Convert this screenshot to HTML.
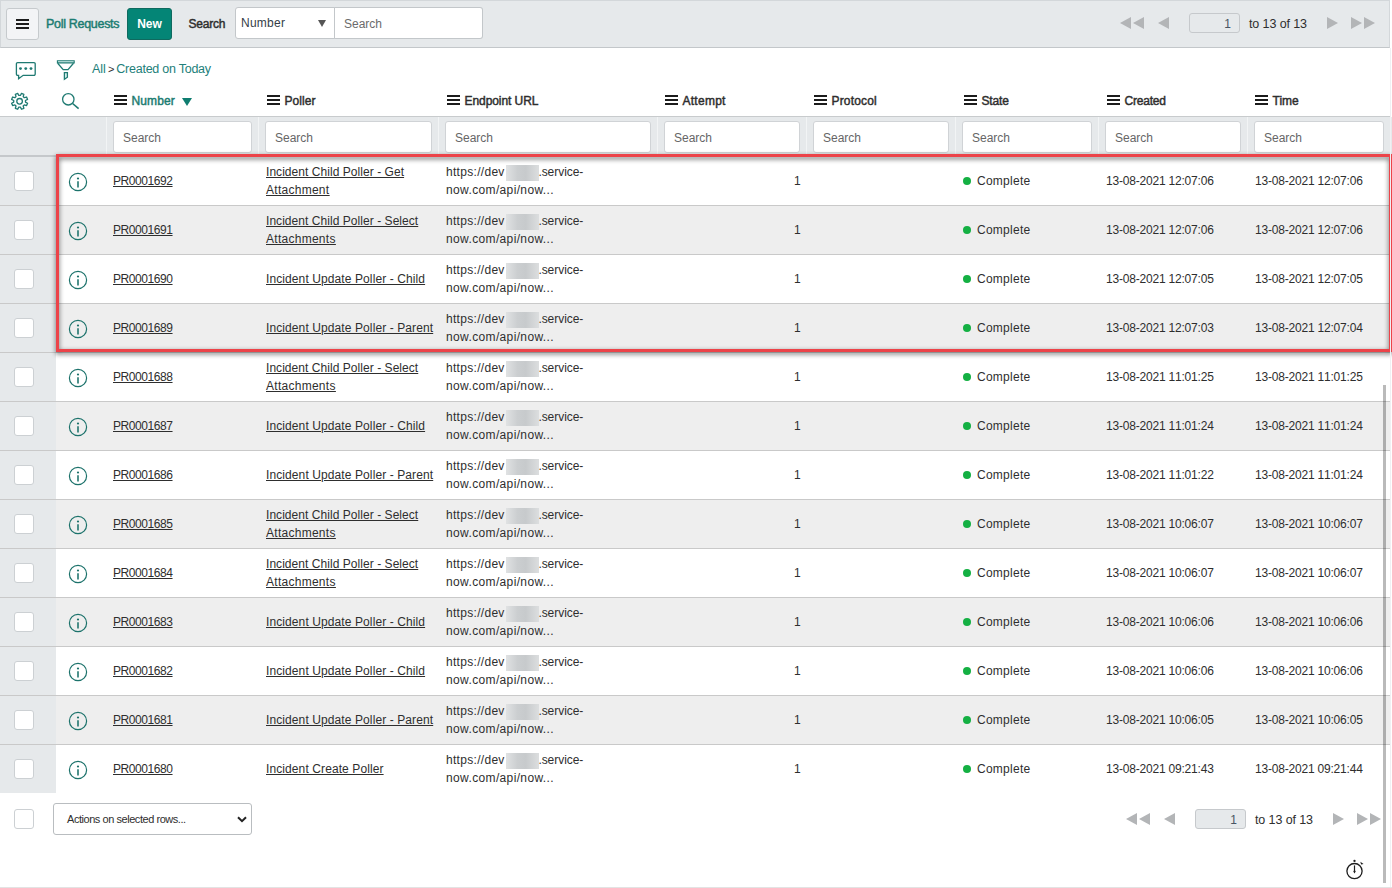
<!DOCTYPE html>
<html lang="en">
<head>
<meta charset="utf-8">
<title>Poll Requests</title>
<style>
html,body{margin:0;padding:0}
body{width:1392px;height:888px;overflow:hidden;background:#fff;position:relative;font-family:"Liberation Sans",sans-serif;font-size:12px;color:#2e2e2e}
i{font-style:normal;display:block}
a{color:#2e2e2e;text-decoration:underline}
/* ---- top nav ---- */
.nav{position:absolute;left:0;top:0;width:1391px;height:48px}
.navbg{position:absolute;left:0;top:0;width:1388px;height:46px;background:#e6e9eb;border:1px solid #d3d7da;border-bottom:1px solid #c3c7ca}
.menubtn{position:absolute;left:6px;top:8px;width:31px;height:30px;border:1px solid #c6cacd;border-radius:3px;background:#f3f4f6}
.menubtn b{position:absolute;left:9px;width:13px;height:2px;background:#1c1c1c}
.title{position:absolute;left:46px;top:16px;font-size:12.5px;letter-spacing:-0.3px;-webkit-text-stroke:0.45px #1b7c71;line-height:16px;color:#1b7c71;white-space:nowrap}
.newbtn{position:absolute;left:127px;top:8px;width:43px;height:30px;border:1px solid #0f6a5f;border-radius:3px;background:#048576;color:#fff;font-weight:bold;font-size:12px;line-height:30px;text-align:center}
.slabel{position:absolute;left:188.500px;top:16px;font-weight:normal;-webkit-text-stroke:0.45px;font-size:12px;letter-spacing:-0.2px;line-height:16px;color:#2e2e2e}
.ssel{position:absolute;left:235px;top:7px;width:98px;z-index:2;height:30px;border:1px solid #c3c7ca;border-radius:3px 0 0 3px;background:#fff}
.ssel span{position:absolute;left:5px;top:7px;line-height:16px;font-size:12px;letter-spacing:0.25px;color:#343d47}
.ssel i{position:absolute;left:82px;top:12px;width:0;height:0;border-left:4.5px solid transparent;border-right:4.5px solid transparent;border-top:7px solid #555}
.sinp{position:absolute;left:334px;top:7px;width:148px;height:30px;border:1px solid #c3c7ca;border-left:0;border-radius:0 3px 3px 0;background:#fff}
.sinp span{position:absolute;left:10px;top:8px;line-height:16px;color:#6b6b6b}
.pg{position:absolute;height:20px}
.pg .tri{position:absolute;top:0;width:0;height:0;border-top:6px solid transparent;border-bottom:6px solid transparent}
.pg .l{border-right:11.5px solid #b3b5b7}
.pg .r{border-left:11.5px solid #b3b5b7}
.pg .box{position:absolute;width:49px;height:18px;border:1px solid #c6c9cc;border-radius:3px;background:#e6e9eb}
.pg .box span{position:absolute;right:8px;top:3px;line-height:15px;color:#485563}
.pg .txt{position:absolute;white-space:nowrap;line-height:16px;font-size:12.5px;letter-spacing:-0.1px;color:#2e2e2e}
/* ---- breadcrumb row ---- */
.bc{position:absolute;left:92px;top:61px;line-height:16px;font-size:12.5px;color:#23807a;white-space:nowrap}
.bc b{font-weight:normal;font-size:11px;color:#2e2e2e;margin:0 2px 0 2px}
.bc span{letter-spacing:-0.25px}
svg.ic{position:absolute;fill:none;stroke:#1f7a72;stroke-width:1.3;overflow:visible}
/* ---- column header ---- */
.colhead{position:absolute;left:0;top:88px;width:1390px;height:28px;border-bottom:1px solid #c8cbcd}
.ch{position:absolute;top:5px;height:16px;white-space:nowrap;font-weight:normal;-webkit-text-stroke:0.45px;font-size:12px;letter-spacing:0.1px;line-height:16px;color:#2e2e2e}
.ch .hb{position:absolute;left:0;top:2px;width:13px;height:10px}
.ch .hb b{display:block;height:2px;background:#1c1c1c;margin-bottom:2px}
.ch span{position:absolute;left:17.500px;top:0}
.ch.sorted span{color:#1b7c71}
.sortarrow{position:absolute;left:67.500px;top:4.500px;width:0;height:0;border-left:5px solid transparent;border-right:5px solid transparent;border-top:8.500px solid #0f7d70}
/* ---- search row ---- */
.searchrow{position:absolute;left:0;top:117px;width:1392px;height:38px;background:#e6e9eb;border-bottom:2px solid #c5c8cb}
.vsep{position:absolute;top:0;width:1px;height:38px;background:#f2f4f5}
.sin{position:absolute;top:4px;height:30px;border:1px solid #d0d3d6;border-radius:3px;background:#fff}
.sin span{position:absolute;left:9px;top:8px;line-height:16px;color:#666}
/* ---- rows ---- */
.row{position:absolute;left:0;width:1390px;height:48px;border-bottom:1px solid #c9c9c9;background:#fff}
.row.even{background:#eee}
.row.last{border-bottom:0}
.cbcell{position:absolute;left:0;top:0;width:56px;height:48px;background:#e6e9eb}
.cb{position:absolute;left:14px;top:14px;width:18px;height:18px;border:1px solid #ccd0d3;border-radius:3px;background:#fff}
svg.info{position:absolute;left:67.500px;top:15px;width:20px;height:20px;fill:none;stroke:#1c726b;stroke-width:1.200}
svg.info .d{fill:#1c726b;stroke:none}
.num{position:absolute;left:113px;top:16px;line-height:16px;letter-spacing:-0.43px;white-space:nowrap}
.pol{position:absolute;left:266px;top:16px;line-height:16px;letter-spacing:0.1px;white-space:nowrap}
.pol.two{top:6px;line-height:18px;letter-spacing:0.05px}
.url{position:absolute;left:446px;top:6px;line-height:18px;letter-spacing:0.3px;white-space:nowrap}
.url u{text-decoration:none;letter-spacing:-0.05px}
.url span{letter-spacing:0.36px}
.pol u{letter-spacing:0.27px}
.url .blur{display:inline-block;vertical-align:-4.500px;width:33px;height:16px;margin:-4px -0.300px 0 1px;background:linear-gradient(90deg,#e0e2e3,#cbced0 35%,#c7cacc 60%,#dcdedf)}
.att{position:absolute;right:589.300px;top:16px;line-height:16px}
.dot{position:absolute;left:963px;top:20px;width:8px;height:8px;border-radius:50%;background:#14b043}
.st{position:absolute;left:977px;top:16px;line-height:16px;letter-spacing:0.26px}
.dt{position:absolute;top:16px;line-height:16px;letter-spacing:-0.2px;font-kerning:none;white-space:nowrap}
.c1{left:1106px}
.c2{left:1255px}
/* ---- highlight ---- */
.hl{position:absolute;left:56px;top:154px;width:1330px;height:191.500px;border:3px solid #ec4349;filter:drop-shadow(0 2px 2.500px rgba(0,0,0,.62))}
/* ---- footer ---- */
.fcb{position:absolute;left:14px;top:809px;width:18px;height:18px;border:1px solid #ccd0d3;border-radius:3px;background:#fff}
.fsel{position:absolute;left:53px;top:803px;width:197px;height:30px;border:1px solid #b9bdc0;border-radius:3px;background:#fff}
.fsel span{position:absolute;left:13px;top:7px;line-height:16px;font-size:11px;letter-spacing:-0.45px;color:#2e2e2e;white-space:nowrap}
.fsel svg{position:absolute;left:183px;top:11.500px;width:10px;height:7px;fill:none;stroke:#222;stroke-width:2}
.scroll{position:absolute;left:1383px;top:385px;width:3px;height:498px;background:rgba(0,0,0,.27)}
.botline{position:absolute;left:0;top:887px;width:1392px;height:1px;background:#e3e3e3}
.rline{position:absolute;left:1390px;top:48px;width:1px;height:839px;background:#f0f0f3}
</style>
</head>
<body>
<div class="nav">
<div class="navbg"></div>
<div class="menubtn"><b style="top:10px"></b><b style="top:14px"></b><b style="top:18px"></b></div>
<div class="title">Poll Requests</div>
<div class="newbtn">New</div>
<div class="slabel">Search</div>
<div class="ssel"><span>Number</span><i></i></div>
<div class="sinp"><span>Search</span></div>
<div class="pg" style="left:1px;top:17px">
<i class="tri l" style="left:1119px"></i><i class="tri l" style="left:1131.500px"></i>
<i class="tri l" style="left:1156.500px"></i>
<div class="box" style="left:1188px;top:-4px"><span>1</span></div>
<div class="txt" style="left:1248px;top:-1px">to 13 of 13</div>
<i class="tri r" style="left:1326px"></i>
<i class="tri r" style="left:1350px"></i><i class="tri r" style="left:1362.500px"></i>
</div>
</div>
<svg class="ic" style="left:15px;top:61px;width:22px;height:19px" viewBox="0 0 22 19"><path d="M2.600 1.700h16.400a1.200 1.200 0 0 1 1.200 1.200v10.200a1.200 1.200 0 0 1-1.200 1.200H8.200l-4.600 3.500v-3.500H2.600a1.200 1.200 0 0 1-1.200-1.200V2.900a1.200 1.200 0 0 1 1.200-1.200z"/><circle cx="5.500" cy="7.600" r="1.450" fill="#1f7a72" stroke="none"/><circle cx="10.750" cy="7.600" r="1.450" fill="#1f7a72" stroke="none"/><circle cx="16" cy="7.600" r="1.450" fill="#1f7a72" stroke="none"/></svg>
<svg class="ic" style="left:56px;top:59px;width:20px;height:22px" viewBox="0 0 20 22"><path d="M1.400 1.800h16.800v2.100H1.400z" fill="#d9f3f1" stroke-width="1.100"/><path d="M1.700 4.300l5.500 6.300h4.800l5.500-6.300"/><path d="M8.400 13.600h3v4.600l-3 2z" fill="#d9f3f1"/></svg>
<div class="bc">All<b>&gt;</b><span>Created on Today</span></div>
<svg class="ic" style="left:10px;top:91px;width:20px;height:20px" viewBox="0 0 20 20"><circle cx="9.6" cy="10.3" r="2.800"/><path stroke-linejoin="round" d="M10.39 4.45L11.51 2.33L13.88 3.31L13.18 5.61L14.29 6.72L16.59 6.02L17.57 8.39L15.45 9.51L15.45 11.09L17.57 12.21L16.59 14.58L14.29 13.88L13.18 14.99L13.88 17.29L11.51 18.27L10.39 16.15L8.81 16.15L7.69 18.27L5.32 17.29L6.02 14.99L4.91 13.88L2.61 14.58L1.63 12.21L3.75 11.09L3.75 9.51L1.63 8.39L2.61 6.02L4.91 6.72L6.02 5.61L5.32 3.31L7.69 2.33L8.81 4.45z"/></svg>
<svg class="ic" style="left:61px;top:92px;width:19px;height:18px" viewBox="0 0 19 18"><circle cx="7.300" cy="7.300" r="5.700"/><path d="M11.600 11.500l6 5.200" stroke-width="1.600"/></svg>
<div class="colhead">
<div class="ch sorted" style="left:114px"><i class="hb"><b></b><b></b><b></b></i><span style="letter-spacing:0.1px">Number</span><i class="sortarrow"></i></div>
<div class="ch" style="left:267px"><i class="hb"><b></b><b></b><b></b></i><span style="letter-spacing:0.05px">Poller</span></div>
<div class="ch" style="left:447px"><i class="hb"><b></b><b></b><b></b></i><span style="letter-spacing:-0.07px">Endpoint URL</span></div>
<div class="ch" style="left:665px"><i class="hb"><b></b><b></b><b></b></i><span style="letter-spacing:0.26px">Attempt</span></div>
<div class="ch" style="left:814px"><i class="hb"><b></b><b></b><b></b></i><span style="letter-spacing:0.16px">Protocol</span></div>
<div class="ch" style="left:964px"><i class="hb"><b></b><b></b><b></b></i><span style="letter-spacing:-0.18px">State</span></div>
<div class="ch" style="left:1107px"><i class="hb"><b></b><b></b><b></b></i><span style="letter-spacing:-0.21px">Created</span></div>
<div class="ch" style="left:1255px"><i class="hb"><b></b><b></b><b></b></i><span style="letter-spacing:0.02px">Time</span></div>
</div>
<div class="searchrow">
<i class="vsep" style="left:106px"></i><div class="sin" style="left:113px;width:137px"><span>Search</span></div>
<i class="vsep" style="left:258px"></i><div class="sin" style="left:265px;width:165px"><span>Search</span></div>
<i class="vsep" style="left:438px"></i><div class="sin" style="left:445px;width:204px"><span>Search</span></div>
<i class="vsep" style="left:657px"></i><div class="sin" style="left:664px;width:134px"><span>Search</span></div>
<i class="vsep" style="left:806px"></i><div class="sin" style="left:813px;width:134px"><span>Search</span></div>
<i class="vsep" style="left:955px"></i><div class="sin" style="left:962px;width:128px"><span>Search</span></div>
<i class="vsep" style="left:1098px"></i><div class="sin" style="left:1105px;width:134px"><span>Search</span></div>
<i class="vsep" style="left:1247px"></i><div class="sin" style="left:1254px;width:128px"><span>Search</span></div>
</div>
<div class="rows">
<div class="row" style="top:157px"><div class="cbcell"><i class="cb"></i></div><svg class="info" viewBox="0 0 20 20"><circle cx="10" cy="10" r="8.6"/><path d="M10 9.200v6.200" stroke-width="1.550"/><circle class="d" cx="10" cy="6.500" r="1.100"/></svg><a class="num">PR0001692</a><a class="pol two">Incident Child Poller - Get<br><u>Attachment</u></a><div class="url">https://dev<i class="blur"></i><u>.service-</u><br><span>now.com/api/now...</span></div><span class="att">1</span><i class="dot"></i><span class="st">Complete</span><span class="dt c1">13-08-2021 12:07:06</span><span class="dt c2">13-08-2021 12:07:06</span></div>
<div class="row even" style="top:206px"><div class="cbcell"><i class="cb"></i></div><svg class="info" viewBox="0 0 20 20"><circle cx="10" cy="10" r="8.6"/><path d="M10 9.200v6.200" stroke-width="1.550"/><circle class="d" cx="10" cy="6.500" r="1.100"/></svg><a class="num">PR0001691</a><a class="pol two">Incident Child Poller - Select<br><u>Attachments</u></a><div class="url">https://dev<i class="blur"></i><u>.service-</u><br><span>now.com/api/now...</span></div><span class="att">1</span><i class="dot"></i><span class="st">Complete</span><span class="dt c1">13-08-2021 12:07:06</span><span class="dt c2">13-08-2021 12:07:06</span></div>
<div class="row" style="top:255px"><div class="cbcell"><i class="cb"></i></div><svg class="info" viewBox="0 0 20 20"><circle cx="10" cy="10" r="8.6"/><path d="M10 9.200v6.200" stroke-width="1.550"/><circle class="d" cx="10" cy="6.500" r="1.100"/></svg><a class="num">PR0001690</a><a class="pol">Incident Update Poller - Child</a><div class="url">https://dev<i class="blur"></i><u>.service-</u><br><span>now.com/api/now...</span></div><span class="att">1</span><i class="dot"></i><span class="st">Complete</span><span class="dt c1">13-08-2021 12:07:05</span><span class="dt c2">13-08-2021 12:07:05</span></div>
<div class="row even" style="top:304px"><div class="cbcell"><i class="cb"></i></div><svg class="info" viewBox="0 0 20 20"><circle cx="10" cy="10" r="8.6"/><path d="M10 9.200v6.200" stroke-width="1.550"/><circle class="d" cx="10" cy="6.500" r="1.100"/></svg><a class="num">PR0001689</a><a class="pol">Incident Update Poller - Parent</a><div class="url">https://dev<i class="blur"></i><u>.service-</u><br><span>now.com/api/now...</span></div><span class="att">1</span><i class="dot"></i><span class="st">Complete</span><span class="dt c1">13-08-2021 12:07:03</span><span class="dt c2">13-08-2021 12:07:04</span></div>
<div class="row" style="top:353px"><div class="cbcell"><i class="cb"></i></div><svg class="info" viewBox="0 0 20 20"><circle cx="10" cy="10" r="8.6"/><path d="M10 9.200v6.200" stroke-width="1.550"/><circle class="d" cx="10" cy="6.500" r="1.100"/></svg><a class="num">PR0001688</a><a class="pol two">Incident Child Poller - Select<br><u>Attachments</u></a><div class="url">https://dev<i class="blur"></i><u>.service-</u><br><span>now.com/api/now...</span></div><span class="att">1</span><i class="dot"></i><span class="st">Complete</span><span class="dt c1">13-08-2021 11:01:25</span><span class="dt c2">13-08-2021 11:01:25</span></div>
<div class="row even" style="top:402px"><div class="cbcell"><i class="cb"></i></div><svg class="info" viewBox="0 0 20 20"><circle cx="10" cy="10" r="8.6"/><path d="M10 9.200v6.200" stroke-width="1.550"/><circle class="d" cx="10" cy="6.500" r="1.100"/></svg><a class="num">PR0001687</a><a class="pol">Incident Update Poller - Child</a><div class="url">https://dev<i class="blur"></i><u>.service-</u><br><span>now.com/api/now...</span></div><span class="att">1</span><i class="dot"></i><span class="st">Complete</span><span class="dt c1">13-08-2021 11:01:24</span><span class="dt c2">13-08-2021 11:01:24</span></div>
<div class="row" style="top:451px"><div class="cbcell"><i class="cb"></i></div><svg class="info" viewBox="0 0 20 20"><circle cx="10" cy="10" r="8.6"/><path d="M10 9.200v6.200" stroke-width="1.550"/><circle class="d" cx="10" cy="6.500" r="1.100"/></svg><a class="num">PR0001686</a><a class="pol">Incident Update Poller - Parent</a><div class="url">https://dev<i class="blur"></i><u>.service-</u><br><span>now.com/api/now...</span></div><span class="att">1</span><i class="dot"></i><span class="st">Complete</span><span class="dt c1">13-08-2021 11:01:22</span><span class="dt c2">13-08-2021 11:01:24</span></div>
<div class="row even" style="top:500px"><div class="cbcell"><i class="cb"></i></div><svg class="info" viewBox="0 0 20 20"><circle cx="10" cy="10" r="8.6"/><path d="M10 9.200v6.200" stroke-width="1.550"/><circle class="d" cx="10" cy="6.500" r="1.100"/></svg><a class="num">PR0001685</a><a class="pol two">Incident Child Poller - Select<br><u>Attachments</u></a><div class="url">https://dev<i class="blur"></i><u>.service-</u><br><span>now.com/api/now...</span></div><span class="att">1</span><i class="dot"></i><span class="st">Complete</span><span class="dt c1">13-08-2021 10:06:07</span><span class="dt c2">13-08-2021 10:06:07</span></div>
<div class="row" style="top:549px"><div class="cbcell"><i class="cb"></i></div><svg class="info" viewBox="0 0 20 20"><circle cx="10" cy="10" r="8.6"/><path d="M10 9.200v6.200" stroke-width="1.550"/><circle class="d" cx="10" cy="6.500" r="1.100"/></svg><a class="num">PR0001684</a><a class="pol two">Incident Child Poller - Select<br><u>Attachments</u></a><div class="url">https://dev<i class="blur"></i><u>.service-</u><br><span>now.com/api/now...</span></div><span class="att">1</span><i class="dot"></i><span class="st">Complete</span><span class="dt c1">13-08-2021 10:06:07</span><span class="dt c2">13-08-2021 10:06:07</span></div>
<div class="row even" style="top:598px"><div class="cbcell"><i class="cb"></i></div><svg class="info" viewBox="0 0 20 20"><circle cx="10" cy="10" r="8.6"/><path d="M10 9.200v6.200" stroke-width="1.550"/><circle class="d" cx="10" cy="6.500" r="1.100"/></svg><a class="num">PR0001683</a><a class="pol">Incident Update Poller - Child</a><div class="url">https://dev<i class="blur"></i><u>.service-</u><br><span>now.com/api/now...</span></div><span class="att">1</span><i class="dot"></i><span class="st">Complete</span><span class="dt c1">13-08-2021 10:06:06</span><span class="dt c2">13-08-2021 10:06:06</span></div>
<div class="row" style="top:647px"><div class="cbcell"><i class="cb"></i></div><svg class="info" viewBox="0 0 20 20"><circle cx="10" cy="10" r="8.6"/><path d="M10 9.200v6.200" stroke-width="1.550"/><circle class="d" cx="10" cy="6.500" r="1.100"/></svg><a class="num">PR0001682</a><a class="pol">Incident Update Poller - Child</a><div class="url">https://dev<i class="blur"></i><u>.service-</u><br><span>now.com/api/now...</span></div><span class="att">1</span><i class="dot"></i><span class="st">Complete</span><span class="dt c1">13-08-2021 10:06:06</span><span class="dt c2">13-08-2021 10:06:06</span></div>
<div class="row even" style="top:696px"><div class="cbcell"><i class="cb"></i></div><svg class="info" viewBox="0 0 20 20"><circle cx="10" cy="10" r="8.6"/><path d="M10 9.200v6.200" stroke-width="1.550"/><circle class="d" cx="10" cy="6.500" r="1.100"/></svg><a class="num">PR0001681</a><a class="pol">Incident Update Poller - Parent</a><div class="url">https://dev<i class="blur"></i><u>.service-</u><br><span>now.com/api/now...</span></div><span class="att">1</span><i class="dot"></i><span class="st">Complete</span><span class="dt c1">13-08-2021 10:06:05</span><span class="dt c2">13-08-2021 10:06:05</span></div>
<div class="row last" style="top:745px"><div class="cbcell"><i class="cb"></i></div><svg class="info" viewBox="0 0 20 20"><circle cx="10" cy="10" r="8.6"/><path d="M10 9.200v6.200" stroke-width="1.550"/><circle class="d" cx="10" cy="6.500" r="1.100"/></svg><a class="num">PR0001680</a><a class="pol">Incident Create Poller</a><div class="url">https://dev<i class="blur"></i><u>.service-</u><br><span>now.com/api/now...</span></div><span class="att">1</span><i class="dot"></i><span class="st">Complete</span><span class="dt c1">13-08-2021 09:21:43</span><span class="dt c2">13-08-2021 09:21:44</span></div>
</div>
<div class="hl"></div>
<i class="fcb"></i>
<div class="fsel"><span>Actions on selected rows...</span><svg viewBox="0 0 10 7"><path d="M1 1.200l4 4 4-4"/></svg></div>
<div class="pg" style="left:7px;top:813px">
<i class="tri l" style="left:1119px"></i><i class="tri l" style="left:1131.500px"></i>
<i class="tri l" style="left:1156.500px"></i>
<div class="box" style="left:1188px;top:-4px"><span>1</span></div>
<div class="txt" style="left:1248px;top:-1px">to 13 of 13</div>
<i class="tri r" style="left:1326px"></i>
<i class="tri r" style="left:1350px"></i><i class="tri r" style="left:1362.500px"></i>
</div>
<svg class="ic" style="left:1345px;top:859px;width:20px;height:21px;stroke:#1e1e1e" viewBox="0 0 20 21"><circle cx="9.500" cy="12.100" r="7.600"/><path d="M9.500 6.400v6.500" stroke-width="1.200"/><path d="M9.500 10.800l1.200 1.800-1.200 2-1.200-2z" fill="#1e1e1e" stroke="none"/><circle cx="9.500" cy="1.900" r="1.150" fill="#1e1e1e" stroke="none"/><path d="M15.300 2.700l3.300 2.300-2.500.6z" fill="#1e1e1e" stroke="none"/></svg>
<i class="scroll"></i>
<i class="botline"></i>
<i class="rline"></i>
</body>
</html>
